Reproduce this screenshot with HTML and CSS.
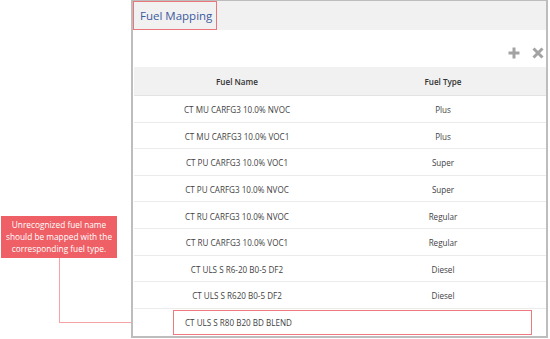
FILE: index.html
```html
<!DOCTYPE html>
<html>
<head>
<meta charset="utf-8">
<link rel="stylesheet" href="styles.css">
</head>
<body>
<div class="page">
  <div class="panel">
    <div class="panel-head">
      <div class="title">Fuel Mapping</div>
    </div>
    <div class="toolbar">
      <svg class="icon" width="12" height="12" viewBox="0 0 12 12"><path d="M6 0.5v11M0.5 6h11" stroke="#a3a3a3" stroke-width="3"/></svg>
      <svg class="icon" width="12" height="12" viewBox="0 0 12 12"><path d="M1.5 1.5l9 9M10.5 1.5l-9 9" stroke="#a3a3a3" stroke-width="3"/></svg>
    </div>
    <div class="table">
      <div class="row head"><div class="cell">Fuel Name</div><div class="cell">Fuel Type</div></div>
      <div class="row"><div class="cell">CT MU CARFG3 10.0% NVOC</div><div class="cell">Plus</div></div>
      <div class="row"><div class="cell">CT MU CARFG3 10.0% VOC1</div><div class="cell">Plus</div></div>
      <div class="row"><div class="cell">CT PU CARFG3 10.0% VOC1</div><div class="cell">Super</div></div>
      <div class="row"><div class="cell">CT PU CARFG3 10.0% NVOC</div><div class="cell">Super</div></div>
      <div class="row"><div class="cell">CT RU CARFG3 10.0% NVOC</div><div class="cell">Regular</div></div>
      <div class="row"><div class="cell">CT RU CARFG3 10.0% VOC1</div><div class="cell">Regular</div></div>
      <div class="row"><div class="cell">CT ULS S R6-20 B0-5 DF2</div><div class="cell">Diesel</div></div>
      <div class="row"><div class="cell">CT ULS S R620 B0-5 DF2</div><div class="cell">Diesel</div></div>
      <div class="row last"><div class="highlight">CT ULS S R80 B20 BD BLEND</div></div>
    </div>
  </div>
  <div class="callout">Unrecognized fuel name should be mapped with the corresponding fuel type.</div>
  <div class="connector"></div>
</div>
</body>
</html>
```
FILE: styles.css
```css
* { box-sizing: border-box; }
html, body { margin: 0; padding: 0; background: #fff; }
body { font-family: "Open Sans", "Noto Sans", sans-serif; color: #3f3f3f; }
.page { position: relative; width: 550px; height: 339px; }
.panel {
  margin-left: 131px;
  width: 417px;
  height: 338px;
  border: 2px solid #bdbdbd;
  border-top-width: 1px;
  display: flex;
  flex-direction: column;
}
.panel-head { height: 29px; background: #f1f1f1; display: flex; }
.title {
  width: 84px;
  height: 29px;
  border: 1.5px solid #e8767a;
  color: #3b5b9d;
  font-size: 11.5px;
  display: flex;
  align-items: center;
  padding-left: 6px;
}
.toolbar {
  height: 37px;
  display: flex;
  justify-content: flex-end;
  align-items: center;
  gap: 12px;
  padding-right: 2px;
  padding-top: 8px;
}
.table { margin-left: 1px; display: flex; flex-direction: column; }
.row { display: flex; height: 26.6px; border-bottom: 1px solid #ebebeb; font-size: 8.1px; padding-top: 2px; }
.row.head { height: 29px; padding-top: 0; background: #f1f1f1; border-bottom: 1px solid #e3e3e3; font-weight: 600; color: #333; }
.cell { flex: 1; display: flex; align-items: center; justify-content: center; }
.row.last { border-bottom: none; padding-top: 1px; }
.highlight {
  margin-left: 39px;
  width: 359px;
  height: 25px;
  border: 1.5px solid #ec7a7e;
  display: flex;
  align-items: center;
  padding-left: 11px;
}
.callout {
  position: absolute;
  left: 1px;
  top: 216px;
  width: 116px;
  height: 42px;
  background: #ef5f66;
  color: #fff;
  font-size: 8.3px;
  line-height: 12px;
  text-align: center;
  padding: 3px 4px 0;
}
.connector {
  position: absolute;
  left: 59px;
  top: 258px;
  width: 72px;
  height: 65px;
  border-left: 1px solid #f5a3a6;
  border-bottom: 1px solid #f5a3a6;
}
```
